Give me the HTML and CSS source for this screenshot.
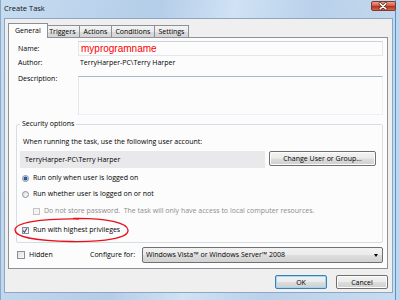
FILE: index.html
```html
<!DOCTYPE html>
<html>
<head>
	<meta charset="utf-8">
	<title>Create Task</title>
	<link rel="stylesheet" href="styles.css">
</head>
<body>
	<div class="window">
		<div class="titlebar">
			<span class="title">Create Task</span>
			<span class="close">
				<svg width="25" height="10" viewBox="0 0 25 10">
					<path d="M9.5 2.5 L15.5 8 M15.5 2.5 L9.5 8" stroke="#5a1a10" stroke-width="3" stroke-linecap="round"/>
					<path d="M9.5 2.5 L15.5 8 M15.5 2.5 L9.5 8" stroke="#fff" stroke-width="1.6" stroke-linecap="round"/>
				</svg>
			</span>
		</div>
		<div class="client">
			<ul class="tabs">
				<li class="current">General</li>
				<li>Triggers</li>
				<li>Actions</li>
				<li>Conditions</li>
				<li>Settings</li>
			</ul>
			<div class="panel">
				<div class="field">
					<span class="label">Name:</span>
					<div class="box name">myprogramname</div>
				</div>
				<div class="field author">
					<span class="label">Author:</span>
					<span class="value">TerryHarper-PC\Terry Harper</span>
				</div>
				<div class="field desc">
					<span class="label">Description:</span>
					<div class="box text"></div>
				</div>
				<fieldset class="group">
					<legend>Security options</legend>
					<p class="hint">When running the task, use the following user account:</p>
					<div class="account">
						<div class="user">TerryHarper-PC\Terry Harper</div>
						<button class="btn change">Change User or Group...</button>
					</div>
					<div class="opt first"><span class="radio on"></span>Run only when user is logged on</div>
					<div class="opt second"><span class="radio"></span>Run whether user is logged on or not</div>
					<div class="opt nostore"><span class="check"></span>Do not store password.&nbsp; The task will only have access to local computer resources.</div>
					<div class="opt highest">
						<span class="check">
							<svg width="7" height="7" viewBox="0 0 7 7"><path d="M1.3 3.6 L2.9 5.6 L5.8 0.8" fill="none" stroke="#3a4f8c" stroke-width="1.2"/></svg>
						</span>Run with highest privileges
						<svg class="ring" width="117" height="28" viewBox="0 0 117 28">
							<path d="M60 2.5 C95 2 114 7 115 14 C116 22 92 26 58 25.5 C24 25 2 21 2 14 C2 7 26 2.5 66 3" fill="none" stroke="#e8101c" stroke-width="1.3"/>
						</svg>
					</div>
				</fieldset>
				<div class="bottom">
					<div class="opt hidden"><span class="check"></span>Hidden</div>
					<span class="conf">Configure for:</span>
					<div class="select">Windows Vista™ or Windows Server™ 2008<span class="arrow"></span></div>
				</div>
			</div>
			<div class="actions">
				<button class="btn default">OK</button>
				<button class="btn">Cancel</button>
			</div>
		</div>
	</div>
</body>
</html>
```

FILE: styles.css
```css
/*去掉默认边距*/
body,div,ul,li,p{margin: 0;padding: 0;}
ul{list-style-type: none;}
body{background: #fff;font:7px/10px "Open Sans", sans-serif;color: #000;}

/*窗口外框*/
.window{
	width: 400px;
	height: 300px;
	box-sizing: border-box;
	padding: 0 7px 7px 4px;
	display: flex;
	flex-direction: column;
	background: linear-gradient(100deg, #c6dcf1 0%, #b4cde8 35%, #d0e2f4 52%, #b9d1ea 70%, #c8dcf0 100%);
	box-shadow: inset 1px 0 0 #8ea9c6, inset -4px 0 0 #bfd6ee, inset -5px 0 0 #5893c6;
}
.titlebar{
	height: 18px;
	display: flex;
	align-items: flex-start;
}
.title{padding: 3px 0 0 0;font-size: 7.5px;line-height: 10px;color: #111;}
.close{
	margin: 1px -3px 0 auto;
	width: 25px;
	height: 10px;
	border-radius: 2px;
	border: 1px solid #7d3a30;
	box-sizing: border-box;
	background: linear-gradient(#e9a08e, #d0604a 45%, #b9301c 55%, #d2664c);
	display: flex;
	overflow: hidden;
}
.close svg{margin: -1px 0 0 -1px;}

/*客户区*/
.client{
	flex: 1;
	background: #f0eff0;
	border: 1px solid #8da6c2;
	padding: 4px 4px 0 3px;
	display: flex;
	flex-direction: column;
}
.tabs{
	display: flex;
	align-items: flex-end;
	height: 14px;
	padding-left: 3px;
}
.tabs li{
	height: 12px;
	box-sizing: border-box;
	border: 1px solid #8e9097;
	border-bottom: none;
	margin-left: -1px;
	padding: 0 3.5px;
	line-height: 11px;
	background: linear-gradient(#f4f4f4, #ebebeb 50%, #dcdcdc 51%, #d4d4d4);
}
.tabs li.current{
	position: relative;
	z-index: 1;
	height: 15px;
	margin: 0 -2px -1px -3px;
	padding: 0 6px;
	line-height: 13px;
	background: #fcfcfc;
}
.panel{
	height: 232px;
	box-sizing: border-box;
	border: 1px solid #8e9097;
	background: #fcfcfc;
	padding: 3px 4px 0 7px;
}

/*上面的三行*/
.field{display: flex;align-items: center;}
.field .label{width: 60px;padding-left: 2px;flex: none;}
.box{flex: 1;box-sizing: border-box;border: 1px solid #e3e6ea;}
.name{
	height: 15px;
	border-top-color: #cdd1d8;
	padding-left: 2px;
	color: #f00;
	font: 10px/13px "Liberation Sans", Arial, sans-serif;
}
.author{height: 13px;}
.author .value{padding-left: 2px;}
.desc{align-items: flex-start;margin-top: 7px;}
.desc .label{margin-top: -2px;}
.text{height: 39px;border-color: #a8b6ca #eef0f3 #eef0f3 #e3e6ea;}

/*安全选项*/
.group{
	margin: 4px 0 0 0;
	border: 1px solid #d6dde3;
	border-radius: 2px;
	padding: 0 4px 7px 3px;
	min-width: 0;
}
.group legend{padding: 0 2px;line-height: 10px;}
.hint{margin: 8px 0 0 3px;}
.account{display: flex;align-items: flex-start;margin-top: 4px;}
.user{width: 245px;height: 17px;line-height: 17px;padding-left: 5px;box-sizing: border-box;background: #e9e8ea;}
.btn{
	box-sizing: border-box;
	height: 15px;
	padding: 0;
	font: 7px/12px "Open Sans", sans-serif;
	color: #000;
	border: 1px solid #707070;
	border-radius: 2px;
	background: linear-gradient(#f3f3f3, #ebebeb 48%, #dddddd 52%, #cfcfcf);
	box-shadow: inset 0 0 0 1px #fcfcfc;
}
.change{width: 107px;margin-left: 4px;}
.opt{display: flex;align-items: center;height: 10px;}
.first{margin: 5px 0 0 2px;}
.second{margin: 6px 0 0 2px;}
.nostore{margin: 7px 0 0 13px;color: #8d8d8d;}
.highest{position: relative;margin: 9px 0 0 2px;}
/*红圈,盖在上面*/
.ring{position: absolute;left: -9px;top: -9px;}

.radio,.check{
	width: 7px;
	height: 7px;
	box-sizing: border-box;
	margin-right: 4px;
	border: 1px solid #8c8f95;
	background: linear-gradient(135deg, #e0e0e0, #fbfbfb);
	display: flex;
	flex: none;
}
.radio{border-radius: 50%;}
.radio.on{background: radial-gradient(circle, #2a6fc0 0, #1b4f96 1.6px, #cfe0f2 2.2px, #f4f4f4 3px);}
.nostore .check{border-color: #c4c4c4;background: #f4f4f4;}
.check svg{margin: -1px 0 0 -1px;}

/*底部一行*/
.bottom{
	display: grid;
	grid-template-columns: 74px 52px 1fr;
	align-items: center;
	margin-top: 4px;
	height: 16px;
}
.hidden{margin-left: 1px;}
.hidden .check{width: 8px;height: 8px;}
.select{
	position: relative;
	height: 16px;
	box-sizing: border-box;
	border: 1px solid #707070;
	border-radius: 2px;
	padding-left: 3px;
	line-height: 14px;
	background: linear-gradient(#f2f2f2, #ebebeb 48%, #dddddd 52%, #d2d2d2);
}
.arrow{
	position: absolute;
	right: 4px;
	top: 6px;
	border: 2.5px solid transparent;
	border-top: 3px solid #000;
	border-bottom: none;
}

/*确定取消*/
.actions{display: flex;justify-content: flex-end;gap: 9px;margin-top: 6px;}
.actions .btn{width: 52px;height: 14px;line-height: 11px;}
.actions .default{border-color: #3c7fb1;box-shadow: inset 0 0 0 1px #9fd8f5;}
```
